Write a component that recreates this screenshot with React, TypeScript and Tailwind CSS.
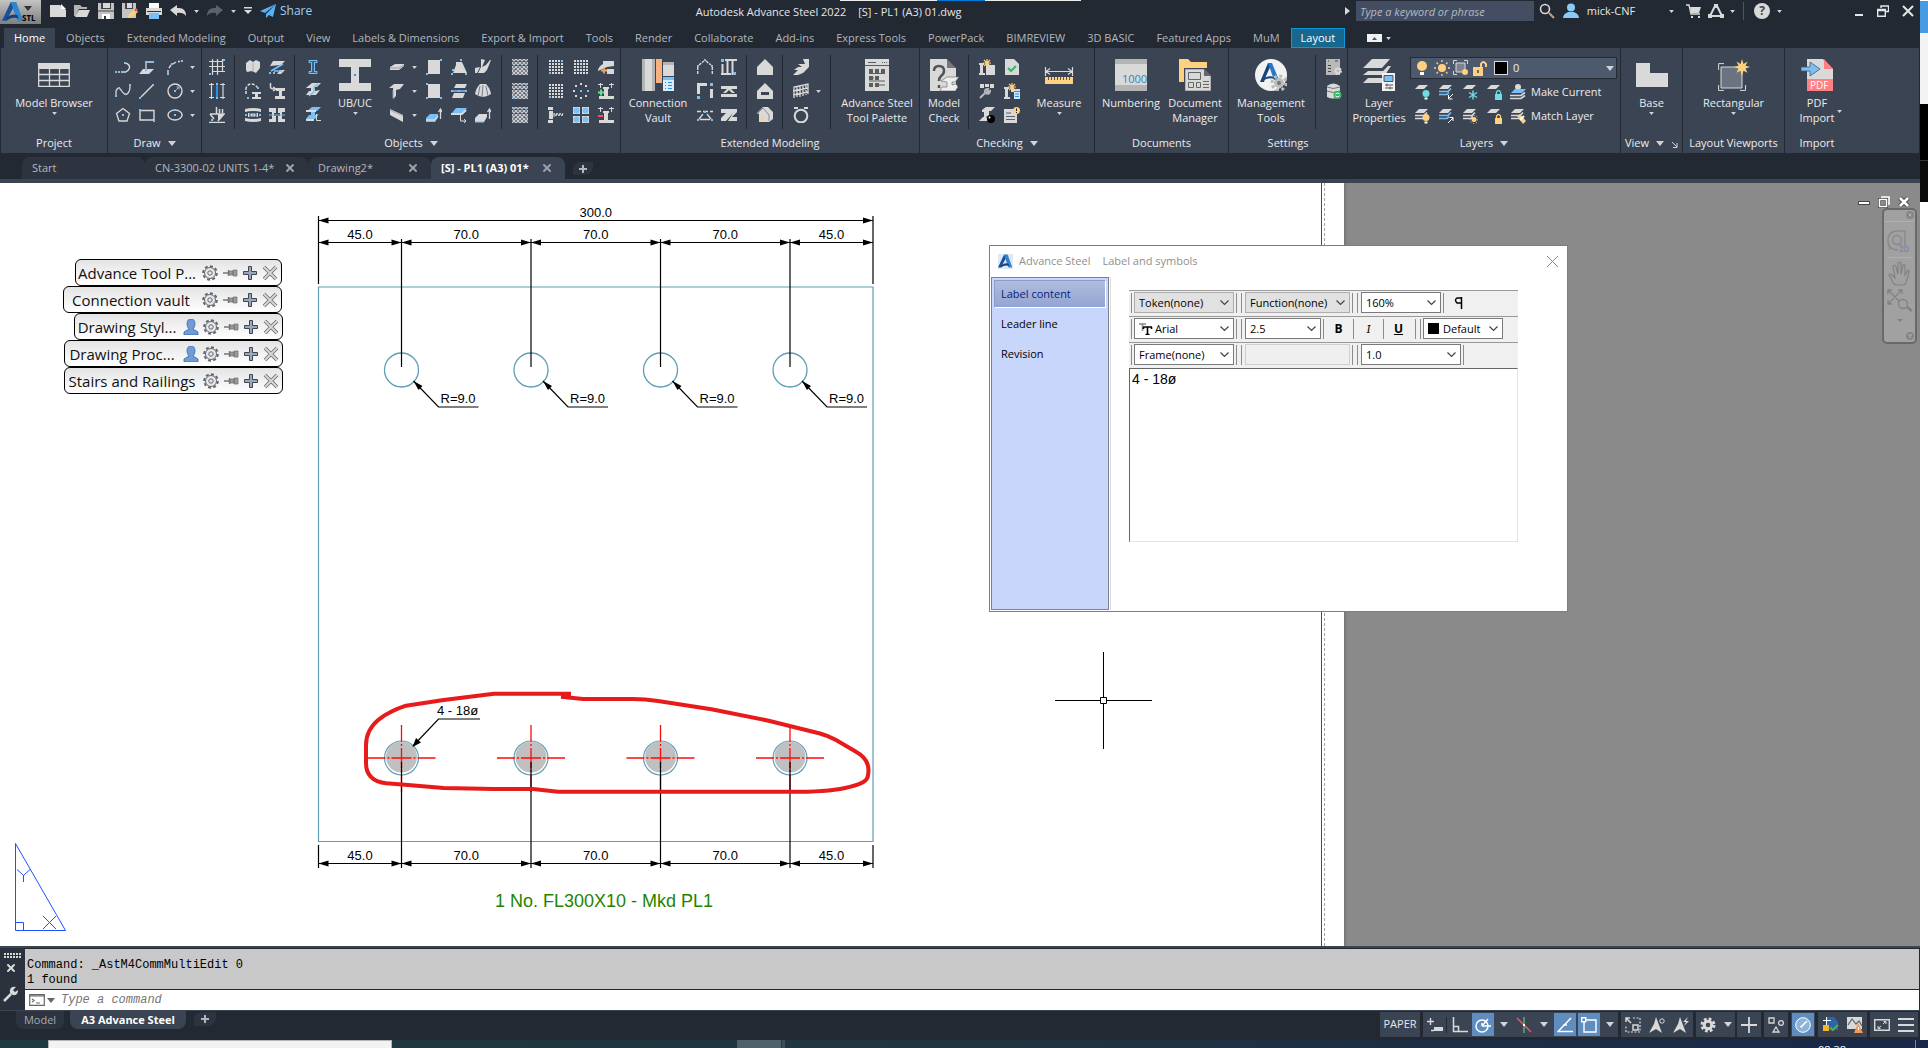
import React from 'react';
import { X, Check } from 'lucide-react';

const G = '#d9d9d9';
const B = '#78c0f5';
const Y = '#ffd080';

interface SvgProps {
  size?: number;
  children: React.ReactNode;
}

const Ico: React.FC<SvgProps> = ({ size = 16, children }) => (
  <svg width={size} height={size} viewBox={`0 0 ${size} ${size}`} fill="none" className="block shrink-0" aria-hidden="true">
    {children}
  </svg>
);

// small grip squares used on most drawing icons
const Dots: React.FC<{ at: number[][]; color?: string }> = ({ at, color = B }) => (
  <>
    {at.map(([x, y]) => (
      <rect key={`${x}-${y}`} x={x} y={y} width={2} height={2} fill={color} />
    ))}
  </>
);

const Caret: React.FC<{ big?: boolean; className?: string }> = ({ big = false, className = '' }) => (
  <svg width={big ? 8 : 5} height={big ? 5 : 3} viewBox="0 0 8 5" className={`block shrink-0 ${className}`} aria-hidden="true">
    <path d="M0 0h8L4 5z" fill="#d0d3d8" />
  </svg>
);

const cells = (cols: number, rows: number, step: number) =>
  Array.from({ length: cols * rows }, (_, i) => [(i % cols) * step, Math.floor(i / cols) * step]);

const DotGrid: React.FC<{ blue: number[] }> = ({ blue }) => (
  <Ico>
    {cells(5, 5, 3).map(([x, y], i) => (
      <rect key={i} x={x + 1} y={y + 1} width={2} height={2} fill={blue.includes(i) ? B : G} />
    ))}
  </Ico>
);

const Grating: React.FC<{ at: number[][] }> = ({ at }) => (
  <Ico>
    <path
      d="M0 4L4 0M0 8L8 0M0 12L12 0M0 16L16 0M4 16L16 4M8 16L16 8M12 16L16 12M12 0L16 4M8 0L16 8M4 0L16 12M0 0L16 16M0 4L12 16M0 8L8 16M0 12L4 16"
      stroke="#c9ccd0"
      strokeWidth="1.3"
    />
    <Dots at={at} />
  </Ico>
);

const Layers: React.FC<{ top?: string; mid?: string; single?: boolean; children?: React.ReactNode }> = ({ top = G, mid = G, single, children }) => (
  <Ico>
    <path d="M5 1h9l-4 4H1z" fill={top} />
    {!single && <path d="M1 7.500h9l3-3M1 10.500h8l2-2" stroke={mid} strokeWidth="1.600" />}
    {children}
  </Ico>
);

const draw = {
  polyline: (
    <Ico>
      <path d="M3 13h2M6 13h3M10 4q5 1 4.500 5q-1 3-4 4" stroke={G} strokeWidth="1.400" />
      <Dots at={[[0, 12], [9, 12], [9, 3]]} />
    </Ico>
  ),
  spline: (
    <Ico>
      <path d="M1 13V8q2-5 5-1q4 6 6 4q3-2 3-8" stroke={G} strokeWidth="1.300" />
      <Dots at={[[0, 12], [3, 4], [9, 10], [14, 1]]} />
    </Ico>
  ),
  polygon: (
    <Ico>
      <path d="M8 1.500l6.500 5-2.500 7.500H4L1.500 6.500z" stroke={G} strokeWidth="1.300" />
      <Dots at={[[7, 7]]} />
    </Ico>
  ),
  plane: (
    <Ico>
      <path d="M0 15l4-5h11l-5 5z" fill={G} />
      <path d="M7 12V3h6" stroke={G} strokeWidth="1.300" />
      <Dots at={[[6, 2], [13, 2], [6, 10]]} />
    </Ico>
  ),
  line: (
    <Ico>
      <path d="M2 14L14 2" stroke={G} strokeWidth="1.400" />
      <Dots at={[[0, 14], [13, 1]]} />
    </Ico>
  ),
  rect: (
    <Ico>
      <path d="M1 3.500h14v9.500H1z" stroke={G} strokeWidth="1.400" />
      <Dots at={[[0, 2], [14, 13]]} />
    </Ico>
  ),
  arc: (
    <Ico>
      <path d="M1 14V11M2 9l2-3M6 5l3-2M11 2.500h2" stroke={G} strokeWidth="1.400" />
      <Dots at={[[0, 14], [4, 4], [14, 1]]} />
    </Ico>
  ),
  circle: (
    <Ico>
      <circle cx="8" cy="8" r="7" stroke={G} strokeWidth="1.400" />
      <path d="M9 7l3-3M9.500 4H12v2.500" stroke={B} />
      <Dots at={[[7, 7]]} />
    </Ico>
  ),
  ellipse: (
    <Ico>
      <ellipse cx="8" cy="8" rx="7" ry="5" stroke={G} strokeWidth="1.400" />
      <Dots at={[[7, 7], [7, 2], [14, 7]]} />
    </Ico>
  ),
};

const obj = {
  grid: (
    <Ico>
      <path d="M3.500 0v16M8.500 0v16M13.500 0v13M0 2.500h13M0 7.500h16M3 12.500h13" stroke={G} strokeWidth="1.200" />
      <Dots at={[[14, 0], [0, 14]]} />
    </Ico>
  ),
  gridBlue: (
    <Ico>
      <path d="M2.500 0v16M14 0v16M0 1.500h5M11 1.500h5M0 14.500h5M11 14.500h5" stroke={G} strokeWidth="1.200" />
      <path d="M8 2v12" stroke="#2294ee" strokeWidth="2" />
      <Dots at={[[7, 0], [7, 14]]} />
    </Ico>
  ),
  level: (
    <Ico>
      <path d="M1 7h14l-6 7M1 7l4 5M0 15.500h16M7.500 0v7M10.500 2v4M13.500 2v4" stroke={G} strokeWidth="1.500" />
      <path d="M9 7h6l-6 7z" fill={G} />
      <Dots at={[[2, 12]]} />
    </Ico>
  ),
  extrude: (
    <Ico>
      <path d="M1 4l4-3 3 2 3-2 4 2v6l-4 5-4-2-5 1-1-2z" fill={G} />
      <path d="M8 4v9" stroke="#a8abb0" />
    </Ico>
  ),
  bend: (
    <Ico>
      <path d="M1 7l3-5h12l-4 4zM8 15l3-4h5l-4 4z" fill={G} />
      <path d="M2 12l12-7M5 12h8" stroke={B} strokeWidth="1.600" />
      <Dots at={[[0, 13], [4, 13]]} />
    </Ico>
  ),
  rotate: (
    <Ico>
      <path d="M1 11V5q3-6 9-3l3 3" stroke={G} strokeWidth="1.500" strokeDasharray="3 1.500" />
      <path d="M7 9h9v2h-3v3h3v2H7v-2h3v-3H7z" fill={G} />
      <Dots at={[[0, 5], [12, 4], [2, 14]]} />
    </Ico>
  ),
  move: (
    <Ico>
      <path d="M1.500 0v4q0 2 4 2M4 4l3 2-3 2" stroke={G} strokeWidth="1.500" />
      <path d="M7 5h9v3h-3v5h3v3H6v-3h4V8H7z" fill={G} />
    </Ico>
  ),
  curved: (
    <Ico>
      <path d="M0 2q8-2 16 0v3q-8-2-16 0zM0 11q8 2 16 0v3q-8 2-16 0zM3 6h10v4H3z" fill={G} />
      <Dots at={[[0, 7], [7, 7], [14, 7]]} />
      <path d="M5 6h6v4H5z" stroke="#3b4453" />
    </Ico>
  ),
  align: (
    <Ico>
      <path d="M0 1h7v5H5v3h2v6H0v-3h3V5H0zM9 1h7v4h-3v7h3v3H9V9h2V6H9z" fill={G} />
      <path d="M0 8h16" stroke={B} />
    </Ico>
  ),
  ibeam: (
    <Ico>
      <path d="M4 1.500h8v2H9.500v9H12v2H4v-2h2.500v-9H4z" stroke={B} fill="#35628a" />
    </Ico>
  ),
  beam3d: (
    <Ico>
      <path d="M2 4l5-4h9l-4 4h-2v4l5-1-4 5H1l3-4h2V5H1z" fill={G} />
      <path d="M4 13l5-4V4l4-3" stroke={B} strokeWidth="1.400" />
    </Ico>
  ),
  beamUcs: (
    <Ico>
      <path d="M2 4l5-4h9l-4 4h-2v4l4-1-4 5H1l3-4h2V5H1z" fill={B} />
      <path d="M1 4h10M1 13h8" stroke={G} strokeWidth="2" />
      <path d="M11.500 7v6.500H16" stroke={G} />
    </Ico>
  ),
  plate1: (
    <Ico>
      <path d="M1 8l5-3h9v2l-5 4H1z" fill={G} />
      <path d="M1 9h9l5-3" stroke="#999da5" />
    </Ico>
  ),
  plate2: (
    <Ico>
      <path d="M0 5l5-4h10l-4 5-4 1v6l-3 3V5z" fill={G} />
      <path d="M4 7v8" stroke="#999da5" />
    </Ico>
  ),
  plate3: (
    <Ico>
      <path d="M1 2l13 6v7L1 8z" fill={G} />
      <path d="M1 3l13 6" stroke="#aaadb3" />
    </Ico>
  ),
  sq1: (
    <Ico>
      <path d="M2 1h12v14H2z" fill={G} />
      <Dots at={[[14, 0], [0, 14]]} />
    </Ico>
  ),
  sq2: (
    <Ico>
      <path d="M2 1h12v14H2z" fill={G} />
      <Dots at={[[0, 0], [0, 14], [14, 14]]} />
    </Ico>
  ),
  up: (
    <Ico>
      <path d="M0 11l4-4h8v3l-3 5H0z" fill={B} />
      <path d="M0 13h9l3-4M14.500 12V3M12.500 5l2-3 1.500 3" stroke={G} strokeWidth="1.300" />
    </Ico>
  ),
  trap: (
    <Ico>
      <path d="M5 3h6l5 11H2l3-8z" fill={G} />
      <Dots at={[[9, 0], [1, 10], [0, 14], [14, 14]]} />
    </Ico>
  ),
  split: (
    <Ico>
      <path d="M5 1h11l-2 4H3zM3 10h11l-2 5H1z" fill={G} />
      <path d="M2 8h12" stroke={B} strokeWidth="1.500" />
      <Dots at={[[0, 7], [7, 7], [14, 7]]} />
    </Ico>
  ),
  slab: (
    <Ico>
      <path d="M5 1h11l-5 6H0z" fill={B} />
      <path d="M0 7h11l4-4" stroke={G} strokeWidth="2" />
      <path d="M9.500 8v6H15M13 12l2 2-2 2" stroke={G} />
    </Ico>
  ),
  fold: (
    <Ico>
      <path d="M0 9l5-1-3 6H0zM6 0l4 1-3 7 4-2 4-5h1l-4 10-3 3H3l3-6z" fill={G} />
    </Ico>
  ),
  cone: (
    <Ico>
      <path d="M5 1h6q4 4 5 10-8 6-16 0Q1 5 5 1z" fill={G} />
      <path d="M5 3L3 13M8 2L7 14M11 3l2 10" stroke="#777d88" />
    </Ico>
  ),
  up2: (
    <Ico>
      <path d="M0 11l4-4h8v3l-3 5H0z" fill={G} />
      <path d="M0 15h9" stroke={B} />
      <path d="M14.500 12V3M12.500 5l2-3 1.500 3" stroke={G} strokeWidth="1.300" />
    </Ico>
  ),
  bolt: (
    <Ico>
      <path d="M0 0h5v3H0zM1 4h4v8H1zM0 13h5v3H0z" fill={G} />
      <path d="M6 10V6l2 3 1-3 2 3 1-3 2 3 1-3" stroke={G} />
    </Ico>
  ),
  ring: (
    <Ico>
      <Dots at={[[2, 2], [7, 0], [12, 2], [0, 7], [2, 12], [7, 14], [12, 12]]} color={G} />
      <Dots at={[[7, 7], [14, 7]]} />
    </Ico>
  ),
  quad: (
    <Ico>
      <path d="M0 0h7v7H0zM9 0h7v7H9zM0 9h7v7H0zM9 9h7v7H9z" fill={G} />
      <circle cx="3.500" cy="3.500" r="3" fill={B} />
      <circle cx="12.500" cy="3.500" r="3" fill={B} />
      <circle cx="3.500" cy="12.500" r="3" fill={B} />
      <circle cx="12.500" cy="12.500" r="3" fill={B} />
    </Ico>
  ),
  weld: (
    <Ico>
      <path d="M0 12q0-4 5-7V2h11v5L9 8zM9 10h7v5H9z" fill={G} />
      <path d="M3 11.500h6M6 8.500v6" stroke="#f5a15f" strokeWidth="1.800" />
    </Ico>
  ),
  addPt: (
    <Ico>
      <path d="M0 1.500h5M2.500 0v5M11 1.500h5M13.500 0v5" stroke={G} />
      <path d="M5 4h6v2h-1v7h6v3H1v-3h5V6H5z" fill={G} />
      <path d="M0 9.500h6M3 6.500v6" stroke="#5ee084" strokeWidth="2" />
    </Ico>
  ),
  delPt: (
    <Ico>
      <path d="M0 1.500h5M2.500 0v5M11 1.500h5M13.500 0v5" stroke={G} />
      <path d="M5 4h6v2h-1v7h6v3H1v-3h5V6H5z" fill={G} />
      <path d="M0 9h5" stroke="#f05252" strokeWidth="2" />
    </Ico>
  ),
};

const ext = {
  portal: (
    <Ico>
      <path d="M.7 15V8M15.300 15V8M2 6l5-4M9 2l5 4" stroke={G} strokeWidth="1.400" strokeDasharray="3 1" />
      <Dots at={[[7, 0], [0, 6], [14, 6]]} />
    </Ico>
  ),
  frame: (
    <Ico>
      <path d="M1.500 11V1.500H10M14.500 6v9" stroke={G} strokeWidth="3" />
      <path d="M0 13h3v3H0zM13 0h3v3h-3z" fill={B} />
    </Ico>
  ),
  truss: (
    <Ico>
      <path d="M0 4.500h4M6 4.500h5M13 4.500h3M2 12l4-5M10 7l4 5M3 12.500h10" stroke={G} strokeWidth="1.300" />
      <Dots at={[[7, 4], [0, 12], [14, 12]]} />
    </Ico>
  ),
  bracing: (
    <Ico>
      <path d="M1.500 5v11M6.500 0v16M11.500 0v16M0 15h10M4 1h12" stroke={G} strokeWidth="2" />
      <path d="M0 0h3v3H0zM12 13h3v3h-3z" fill={B} />
    </Ico>
  ),
  panel: (
    <Ico>
      <path d="M0 3h16v3H0zM0 11h16v3H0zM2 10l4-4h4l4 4h-3L8 7l-3 3z" fill={G} />
    </Ico>
  ),
  zed: (
    <Ico>
      <path d="M0 2h16v3l-5 5h5v4H7l5-8-7 8H0v-3l5-5H0z" fill={G} />
    </Ico>
  ),
  roof: (
    <Ico>
      <path d="M0 8l8-8 8 8v8H0z" fill={G} />
    </Ico>
  ),
  roofSlot: (
    <Ico>
      <path d="M0 8l8-8 8 8v8H0z" fill={G} />
      <path d="M4 9h8v3H4z" fill="#3b4453" />
    </Ico>
  ),
  house: (
    <Ico>
      <path d="M0 6l6-6h5l5 5v7l-4 3H2V7z" fill={G} />
      <path d="M0 7l6-6 6 7v6" stroke="#888d96" />
      <path d="M4 9h3v5H4z" fill={Y} />
    </Ico>
  ),
  stair: (
    <Ico>
      <path d="M10 0h6v8l-6 6-5 2H0l5-5H1l4-3h4l-4-3h7z" fill={G} />
    </Ico>
  ),
  railing: (
    <Ico>
      <path d="M1 15V4l14-3v10M0 8l15-3M0 12l15-3M4 14V4M7 14V3M10 13V2M13 12V2" stroke={G} strokeWidth="1.300" />
    </Ico>
  ),
  cage: (
    <Ico>
      <path d="M1 1h4M11 1h4" stroke={G} strokeWidth="2" />
      <circle cx="8" cy="9" r="6.300" stroke={G} strokeWidth="2" />
    </Ico>
  ),
};

const Spark: React.FC<{ x?: number; y?: number }> = ({ x = 0, y = 0 }) => (
  <path
    d={`M${x + 4} ${y}v8M${x} ${y + 4}h8M${x + 1} ${y + 1}l6 6M${x + 7} ${y + 1}l-6 6`}
    stroke={Y}
    strokeWidth="1.200"
  />
);

const chk = {
  newBeam: (
    <Ico>
      <path d="M0 4h5v2H4v8h2v2H0v-2h1V6H0zM7 6h9v10H7z" fill={G} />
      <Spark x={4} />
    </Ico>
  ),
  tools: (
    <Ico>
      <path d="M1 1h4v4H1zM6 1h4v3H6zM11 1h4v4h-4z" fill={G} />
      <path d="M1 15l5-5M6 10q-1-4 3-4l-1 3 3-1q0 4-5 2" stroke="#b3b6bb" strokeWidth="2" />
    </Ico>
  ),
  clash: (
    <Ico>
      <path d="M3 3l4-3h9l-4 4h-2v4l-3 2 3 4H0l4-4h1V5H3z" fill={G} />
      <circle cx="12" cy="12" r="4" fill="#000" />
      <circle cx="10.500" cy="10.500" r="1" fill="#fff" />
    </Ico>
  ),
  page: (
    <Ico>
      <path d="M1 0h9l5 5v11H1z" fill={G} />
      <path d="M4 9l3 3 5-5" stroke="#35b765" strokeWidth="2" />
    </Ico>
  ),
  beamList: (
    <Ico>
      <path d="M0 4h5v2H4v8h2v2H0v-2h1V6H0zM7 6h9v3H7z" fill={G} />
      <path d="M10 8h6v8h-6z" fill="#cfe8ff" />
      <path d="M10 8.500h6M11 11h4M11 13.500h4" stroke="#2294ee" />
      <Spark x={4} />
    </Ico>
  ),
  warn: (
    <Ico>
      <path d="M0 2h13v14H0z" fill={G} />
      <path d="M2 6h5M2 9.500h9M2 12.500h9" stroke="#5a616c" />
      <circle cx="12.500" cy="3.500" r="3.500" fill={Y} />
      <path d="M12.500 1.500v2.500M12.500 5v1" stroke="#222" />
    </Ico>
  ),
  settings: (
    <Ico>
      <path d="M0 0h14v16H0z" fill="#b9b9b9" />
      <path d="M2 2h1M9 2h3M2 6.500h3M2 9.500h3M2 12.500h3" stroke="#444" />
      <circle cx="12" cy="12" r="3" stroke={G} strokeWidth="2" strokeDasharray="1.600 1" />
      <circle cx="12" cy="12" r="2.200" stroke={G} strokeWidth="1.600" />
    </Ico>
  ),
  db: (
    <Ico>
      <path d="M1 3q6-5 13 0v11q-7 3-13 0z" fill={G} />
      <path d="M1 4q6 3 13 0M1 8q6 3 13 0" stroke="#777" />
      <circle cx="11.500" cy="12" r="4" fill="#35b765" />
      <path d="M9.500 11q2-2 4 0M9.500 13q2 2 4 0" stroke="#fff" />
    </Ico>
  ),
};

const bulb = (color: string) => (
  <>
    <circle cx="12" cy="9.500" r="3.500" fill={color} />
    <path d="M10.500 14.500h3" stroke="#fff" strokeWidth="2" />
  </>
);
const lockShape = (color: string) => (
  <>
    <path d="M9 10h7v6H9z" fill={color} />
    <path d="M10.500 10V8q2-3 4 0v2" stroke={color} strokeWidth="1.300" />
  </>
);

const layerRows = [
  {
    label: 'Make Current',
    icons: [
      <Layers key="a" single>{bulb('#6fdde6')}</Layers>,
      <Layers key="b" mid={B}><path d="M15 10l-4 4M10.500 11v4h4" stroke="#fff" /></Layers>,
      <Layers key="c" single><path d="M11 6.500v9M7 8.500l8 5M15 8.500l-8 5" stroke="#6fdde6" strokeWidth="1.400" /></Layers>,
      <Layers key="d" single>{lockShape('#6fdde6')}</Layers>,
    ],
    last: (
      <Ico>
        <circle cx="8" cy="3" r="3" fill={G} />
        <path d="M5 5h11l-4 4H1z" fill={B} />
        <path d="M0 11.500h11l4-3M0 14.500h11l4-3" stroke={G} strokeWidth="1.600" />
      </Ico>
    ),
  },
  {
    label: 'Match Layer',
    icons: [
      <Layers key="a">{bulb(Y)}</Layers>,
      <Layers key="b" mid={B}><path d="M10 15l5-5M11.500 9.500H15V13" stroke="#fff" /></Layers>,
      <Layers key="c"><circle cx="12" cy="11.500" r="2.500" fill={Y} /><circle cx="12" cy="11.500" r="4" stroke={Y} strokeDasharray="1 2" /></Layers>,
      <Layers key="d" single>{lockShape(Y)}</Layers>,
    ],
    last: (
      <Layers>
        <path d="M7 8l3-2 6 7-3 3z" fill={Y} />
        <path d="M10 12l4-4" stroke="#fff" strokeWidth="2" />
      </Layers>
    ),
  },
];

const LogoA: React.FC<{ size: number }> = ({ size }) => (
  <svg width={size} height={size} viewBox="0 0 20 20" className="block shrink-0" aria-hidden="true">
    <path d="M0 18L8 1h5L6 14l-2 4z" fill="#1b4f9c" />
    <path d="M8 1h5l6 17h-5L10 7z" fill="#2f86cf" />
    <path d="M4 15q6-4 10-2l1 3q-6-2-11 2z" fill="#17407f" />
  </svg>
);

const big = {
  browser: (
    <Ico size={32}>
      <path d="M0 4h32v6H0z" fill={G} />
      <path d="M.7 4.700h30.600v22.600H.7zM0 15.500h32M0 21.500h32M11.500 10v17M21.500 10v17" stroke={G} strokeWidth="1.300" />
    </Ico>
  ),
  ubuc: (
    <Ico size={32}>
      <path d="M0 0h32v8H20v16h12v8H0v-8h12V8H0z" fill={G} />
      <path d="M15 15h2v2h-2z" fill="#2294ee" />
    </Ico>
  ),
  vault: (
    <Ico size={32}>
      <path d="M0 0h13v32H0z" fill={G} />
      <path d="M0 0h3v32H0zM10 0h3v32h-3zM21 3h11v3H21z" fill="#b4b4b4" />
      <path d="M14 0h6v24h-6z" fill="#f8b282" />
      <path d="M21 6h11v11H21z" fill={G} />
      <path d="M21 18h11v14H21z" fill="#d8edff" />
      <path d="M21 18h11v3H21z" fill={B} />
      <path d="M23 23.500h1M26 23.500h4M23 26.500h1M26 26.500h4M23 29.500h1M26 29.500h4" stroke="#2294ee" />
    </Ico>
  ),
  palette: (
    <Ico size={32}>
      <path d="M4 0h24v32H4z" fill={G} />
      <path d="M7 3.500h8M21 3.500h1M23 3.500h1M25 3.500h1M4 6.500h24M8 14.500h16M8 22h16M16 26h8M8 19h5" stroke="#5c5c5c" />
      <path d="M8 10h4v4H8zM14 10h4v4h-4zM20 10h4v4h-4zM8 17h4v4H8zM14 17h4v4h-4zM8 24h4v4H8zM14 24h4v4h-4z" fill="#5c5c5c" />
    </Ico>
  ),
  check: (
    <Ico size={32}>
      <path d="M2 0h17v9h9v23H2z" fill={G} />
      <path d="M19 0l9 9h-9z" fill="#777" />
      <path d="M6 12q0-5 5-5t5 5q0 3-3 5-2 2-2 5M11 26v3" stroke="#555" strokeWidth="2.500" />
      <path d="M13 22l6-4h12l-4 5h-3v3l4-1 2 3-3 4H12l2-4h5v-5z" fill="#eee" stroke="#777" strokeWidth=".7" />
    </Ico>
  ),
  measure: (
    <Ico size={32}>
      <path d="M2.500 8v9M29.500 8v9M4 12.500h24M7 9.500l-4 3 4 3M25 9.500l4 3-4 3" stroke={G} strokeWidth="1.200" />
      <path d="M2 18h28v7H2z" fill={Y} />
      <path d="M5.500 18v3M8.500 18v3M11.500 18v3M14.500 18v3M17.500 18v3M20.500 18v3M23.500 18v3M26.500 18v3" stroke="#555" />
    </Ico>
  ),
  numbering: (
    <Ico size={32}>
      <path d="M0 0h32v32H0z" fill={G} />
      <path d="M0 0h32v5H0zM0 26h32v6H0z" fill="#b4b4b4" />
      <text x="7" y="24" fontSize="11" fontFamily="Open Sans" fill="#2a86c8">1000</text>
    </Ico>
  ),
  docs: (
    <Ico size={32}>
      <path d="M0 0h9l3 3h16v6H5v14H0z" fill={Y} />
      <path d="M6 10h19l7 7v15H6z" fill={G} stroke="#555" strokeWidth=".6" />
      <path d="M25 10l7 7h-7z" fill="#666" />
      <path d="M9.500 13.500h12v7h-12zM9.500 23.500h5v5h-5zM17.500 23.500h4v5h-4zM24 22.500h6M24 25.500h6M24 28.500h6" stroke="#666" />
    </Ico>
  ),
  mgmt: (
    <Ico size={32}>
      <circle cx="16" cy="16" r="16" fill="#f2f2f2" />
      <path d="M5 23L13 4h4l-6 13-2 6z" fill="#16447f" />
      <path d="M13 4h4l7 17h-5z" fill="#2c78c4" />
      <path d="M9 19q5-3 10-1l1 2q-6-2-11 1z" fill="#16447f" />
      <circle cx="24" cy="24" r="7" stroke="#bcbcbc" strokeWidth="3" strokeDasharray="3 2.500" />
      <circle cx="24" cy="24" r="5" fill="#bcbcbc" />
      <circle cx="24" cy="24" r="2" fill="#777" />
    </Ico>
  ),
  layers: (
    <Ico size={32}>
      <path d="M9 0h18l-8 9H0zM0 16l5-4h15l5-5h3l-6 9zM0 24l5-5h14v5z" fill={G} />
      <path d="M19 14h13v18H19z" fill="#f4f4f4" />
      <path d="M21 16.500h9v6h-9z" fill={B} stroke="#555" />
      <path d="M22 26h8M22 29h8M24 24.500v3M27 27.500v3" stroke="#555" />
    </Ico>
  ),
  base: (
    <Ico size={32}>
      <path d="M0 4h14v10h18v14H0z" fill={G} />
    </Ico>
  ),
  viewport: (
    <Ico size={32}>
      <path d="M3 8h21v21H3z" fill="#6b7280" stroke={G} />
      <path d="M.6 11V4.600H6M.6 26v5.400H6M22 31.400h5.500V26" stroke={G} />
      <path d="M24 0l1.500 5 4-2.500-2 4.200L32 8l-4.500 1.500 2 4.200-4-2L24 17l-1.500-5.300-4 2 2-4.200L16 8l4.500-1.300-2-4.200 4 2.500z" fill={Y} />
    </Ico>
  ),
  pdf: (
    <Ico size={32}>
      <path d="M6 0h16l10 10v12H6z" fill={G} />
      <path d="M23 0l9 10h-9z" fill="#ff8080" />
      <path d="M6 20h26v12H6z" fill="#ff8080" />
      <path d="M0 8h9V3l10 7-10 7v-5H0z" fill={B} stroke="#4d5866" strokeWidth=".8" />
      <text x="9" y="30" fontSize="10" fontFamily="Open Sans" fill="#fff">PDF</text>
    </Ico>
  ),
};

const Stack: React.FC<{ icons: React.ReactNode[]; name: string; className?: string }> = ({ icons, name, className = '' }) => (
  <div className={`flex w-4 shrink-0 flex-col gap-2 ${className}`}>
    {icons.map((icon, i) => (
      <button key={i} type="button" aria-label={`${name} ${i + 1}`} className="h-4 w-4">
        {icon}
      </button>
    ))}
  </div>
);

const Carets: React.FC<{ className?: string }> = ({ className = '' }) => (
  <div className={`flex flex-col gap-2 ${className}`}>
    {[0, 1, 2].map((i) => (
      <span key={i} className="flex h-4 items-center">
        <Caret />
      </span>
    ))}
  </div>
);

const Sep: React.FC<{ className?: string }> = ({ className = '' }) => <div className={`-mt-1 h-[74px] w-px shrink-0 bg-[#222933] ${className}`} />;

const BigButton: React.FC<{ icon: React.ReactNode; lines: string[]; caret?: boolean; className?: string }> = ({ icon, lines, caret, className = '' }) => (
  <button type="button" className={`flex shrink-0 flex-col items-center whitespace-nowrap leading-[15px] ${className}`}>
    {icon}
    <span className="mt-1">{lines[0]}</span>
    {lines[1] && <span>{lines[1]}</span>}
    {caret && <Caret className="mt-[2px]" />}
  </button>
);

const Panel: React.FC<{ title: string; className?: string; caret?: boolean; last?: boolean; launcher?: boolean; children: React.ReactNode }> = ({
  title,
  className = '',
  caret,
  last,
  launcher,
  children,
}) => (
  <section className={`flex shrink-0 flex-col pt-[11px] ${last ? '' : 'border-r border-[#222933]'} ${className}`}>
    <div className="flex flex-1">{children}</div>
    <div className="flex h-5 items-center justify-center gap-[7px] whitespace-nowrap">
      <span>{title}</span>
      {caret && <Caret big />}
      {launcher && (
        <svg width="6" height="6" viewBox="0 0 6 6" fill="none" className="ml-px mt-1" aria-hidden="true">
          <path d="M0 0l5 5M5 1v4.500H1" stroke="#d0d3d8" />
        </svg>
      )}
    </div>
  </section>
);

const ribbonTabs = [
  'Home', 'Objects', 'Extended Modeling', 'Output', 'View', 'Labels & Dimensions', 'Export & Import', 'Tools', 'Render',
  'Collaborate', 'Add-ins', 'Express Tools', 'PowerPack', 'BIMREVIEW', '3D BASIC', 'Featured Apps', 'MuM', 'Layout',
];

const TitleBar = () => (
  <header className="flex h-7 shrink-0 items-start bg-[#222933] text-[11px]">
    <button type="button" className="flex h-6 w-[41px] items-center bg-gradient-to-b from-[#c4c4c4] to-[#7f7f7f] pl-[2px] text-black">
      <LogoA size={22} />
      <span className="-ml-[2px] mt-3 text-[8px] leading-3 font-bold">STL</span>
      <svg width="8" height="5" viewBox="0 0 8 5" className="-ml-3 -mt-2" aria-hidden="true"><path d="M0 0h8L4 5z" fill="#333" /></svg>
    </button>
    <div className="ml-[9px] flex h-[22px] items-center gap-2">
      <Ico><path d="M0 2h10l6 5v7H0z" fill={G} /><path d="M11 1l5 5h-5z" fill="#fff" /></Ico>
      <Ico><path d="M0 2h6l2 2h5v2H5L2 13H0z" fill="#b4b4b4" /><path d="M5 7h11l-3 7H1z" fill={G} /></Ico>
      <Ico><path d="M0 0h16v16H0z" fill="#c4c4c4" /><path d="M3 0h10v6H3z" fill="#444" /><path d="M5 0h7v5H5z" fill={G} /><path d="M0 8h16" stroke="#444" /><path d="M4 11h8v5H4z" fill="#fff" /><path d="M6 13h2v3H6z" fill="#333" /></Ico>
      <Ico><path d="M0 0h14v15H0z" fill="#c4c4c4" /><path d="M3 0h8v6H3z" fill="#444" /><path d="M5 0h5v5H5z" fill={G} /><path d="M6 15l1-4 6-5 3 3-6 5z" fill={Y} /><path d="M12 7l2-2 2 2-2 2z" fill="#e86060" /></Ico>
      <Ico><path d="M3 0h10v5H3z" fill="#fff" /><path d="M0 5h16v7H0z" fill={G} /><path d="M3 10h10v6H3z" fill={B} /><path d="M1 8.500h14" stroke="#333" /></Ico>
      <Ico><path d="M0 7l7-5v3q9-1 9 8-3-4-9-3v3z" fill={G} /></Ico>
      <Caret />
      <Ico><path d="M16 7L9 2v3q-9-1-9 8 3-4 9-3v3z" fill="#5c626b" /></Ico>
      <Caret />
      <svg width="8" height="8" viewBox="0 0 8 8" aria-hidden="true"><path d="M0 0h8v1.500H0zM0 3h8L4 7z" fill={G} /></svg>
      <button type="button" className="flex items-center gap-1 text-[12px] text-[#9fcff5]">
        <Ico><path d="M16 1L0 8l5 2zM16 1L6 11v4l3-3 4 2z" fill="#57b1f5" /></Ico>
        Share
      </button>
    </div>
    <h1 className="flex h-6 flex-1 items-center justify-center gap-3 whitespace-nowrap text-[#e6e6e6]">
      <span>Autodesk Advance Steel 2022</span>
      <span>[S] - PL1 (A3) 01.dwg</span>
    </h1>
    <div className="flex h-[22px] shrink-0 items-center text-[#e6e6e6]">
      <svg width="5" height="8" viewBox="0 0 5 8" aria-hidden="true"><path d="M0 0l5 4-5 4z" fill={G} /></svg>
      <input
        aria-label="Search"
        placeholder="Type a keyword or phrase"
        className="ml-[6px] h-5 w-[178px] bg-[#434e62] px-1 italic outline-none placeholder:text-[#b4b9c2]"
      />
      <span className="ml-[5px]"><Ico><circle cx="6" cy="6" r="4.500" stroke={G} strokeWidth="1.600" /><path d="M10 10l5 5" stroke="#c9a27a" strokeWidth="2" /></Ico></span>
      <button type="button" className="ml-2 flex items-center gap-[5px]">
        <Ico><circle cx="8" cy="4.500" r="4" fill="#8ccaf8" /><path d="M0 15q0-4 5-6h6q5 2 5 6z" fill="#8ccaf8" /></Ico>
        <span className="w-[54px]">mick-CNF</span>
      </button>
      <Caret className="ml-[31px]" />
      <span className="ml-3"><Ico><path d="M0 2h3l2 9h9" stroke={G} strokeWidth="1.400" /><path d="M4 4h11l-2 6H5z" fill={G} /><path d="M5 13h2v2H5zM12 13h2v2h-2z" fill={G} /></Ico></span>
      <span className="ml-[6px]"><Ico><path d="M2 13L7 3h2l5 10M2 13h12" stroke={G} strokeWidth="2" /><path d="M0 11h4v4H0zM12 11h4v4h-4zM6 1h4v4H6z" fill={G} /></Ico></span>
      <Caret className="ml-[6px]" />
      <span className="ml-2 h-[18px] w-px bg-[#4d5563]" />
      <span className="ml-[10px] flex h-4 w-4 items-center justify-center rounded-full bg-[#d9d9d9] text-[12px] font-bold text-[#444]">?</span>
      <Caret className="ml-[7px]" />
      <div className="ml-[72px] mr-[6px] flex items-center gap-[13px]">
        <button type="button" aria-label="Minimize"><svg width="10" height="12" viewBox="0 0 10 12" aria-hidden="true"><path d="M1 9h8v2H1z" fill="#e6e6e6" /></svg></button>
        <button type="button" aria-label="Restore"><svg width="12" height="12" viewBox="0 0 12 12" fill="none" aria-hidden="true"><path d="M4 3V1h7.500v5.500H9M.7 4.500h7.600v6.800H.7zM.7 5.500h7.600" stroke="#e6e6e6" strokeWidth="1.400" /></svg></button>
        <button type="button" aria-label="Close"><svg width="12" height="12" viewBox="0 0 12 12" fill="none" aria-hidden="true"><path d="M1 1l10 10M11 1L1 11" stroke="#e6e6e6" strokeWidth="2" /></svg></button>
      </div>
    </div>
  </header>
);

const RibbonTabs = () => (
  <nav className="flex h-5 shrink-0 items-stretch bg-[#222933] pl-1 text-[11px] whitespace-nowrap text-[#b3b7bd]">
    {ribbonTabs.map((tab) => (
      <button
        key={tab}
        type="button"
        className={`${
          tab === 'Home'
            ? 'bg-[#3b4453] px-[10px] text-white'
            : tab === 'Layout'
              ? 'border border-[#0d96e0] bg-[#17678f] px-[9px] text-white'
              : 'px-[11px]'
        }`}
      >
        {tab}
      </button>
    ))}
    <button type="button" aria-label="Minimize ribbon" className="ml-[22px] flex items-center gap-1">
      <span className="flex h-2 w-[15px] items-center justify-center bg-[#eef0f2]">
        <svg width="5" height="3" viewBox="0 0 5 3" aria-hidden="true"><path d="M0 3h5L2.500 0z" fill="#555" /></svg>
      </span>
      <Caret />
    </button>
  </nav>
);

const Ribbon = () => (
  <div className="flex h-[105px] shrink-0 overflow-hidden border-x border-[#222933] bg-[#3b4453] text-[11px] text-[#ececec]">
    <Panel title="Project" className="w-[107px]">
      <BigButton icon={big.browser} lines={['Model Browser']} caret className="w-full" />
    </Panel>
    <Panel title="Draw" caret className="w-[94px]">
      <Stack name="Draw line" className="ml-[7px]" icons={[draw.polyline, draw.spline, draw.polygon]} />
      <Stack name="Draw shape" className="ml-2" icons={[draw.plane, draw.line, draw.rect]} />
      <Stack name="Draw curve" className="ml-3" icons={[draw.arc, draw.circle, draw.ellipse]} />
      <Carets className="ml-[7px]" />
    </Panel>
    <Panel title="Objects" caret className="w-[419px]">
      <Stack name="Grid" className="ml-[7px]" icons={[obj.grid, obj.gridBlue, obj.level]} />
      <Sep className="ml-[9px]" />
      <Stack name="Modify" className="ml-[10px]" icons={[obj.extrude, obj.rotate, obj.curved]} />
      <Stack name="Transform" className="ml-2" icons={[obj.bend, obj.move, obj.align]} />
      <Sep className="ml-[9px]" />
      <Stack name="Beam" className="ml-[10px]" icons={[obj.ibeam, obj.beam3d, obj.beamUcs]} />
      <BigButton icon={big.ubuc} lines={['UB/UC']} caret className="ml-4 w-9" />
      <Stack name="Plate" className="ml-4" icons={[obj.plate1, obj.plate2, obj.plate3]} />
      <Carets className="ml-[7px]" />
      <Stack name="Plate shape" className="ml-[9px]" icons={[obj.sq1, obj.sq2, obj.up]} />
      <Stack name="Plate edit" className="ml-[9px]" icons={[obj.trap, obj.split, obj.slab]} />
      <Stack name="Folded plate" className="ml-2" icons={[obj.fold, obj.cone, obj.up2]} />
      <Sep className="ml-[10px]" />
      <Stack
        name="Grating"
        className="ml-[10px]"
        icons={[<Grating key="a" at={[[7, 7]]} />, <Grating key="b" at={[[14, 0], [0, 14]]} />, <Grating key="c" at={[[0, 0], [14, 0]]} />]}
      />
      <Sep className="ml-[9px]" />
      <Stack name="Bolts" className="ml-[10px]" icons={[<DotGrid key="a" blue={[4, 20]} />, <DotGrid key="b" blue={[20]} />, obj.bolt]} />
      <Stack name="Anchors" className="ml-[9px]" icons={[<DotGrid key="a" blue={[12]} />, obj.ring, obj.quad]} />
      <Stack name="Welds" className="ml-[9px]" icons={[obj.weld, obj.addPt, obj.delPt]} />
    </Panel>
    <Panel title="Extended Modeling" className="w-[299px]">
      <BigButton icon={big.vault} lines={['Connection', 'Vault']} className="ml-[5px] w-16" />
      <Stack name="Frame" className="ml-[7px]" icons={[ext.portal, ext.frame, ext.truss]} />
      <Stack name="Bracing" className="ml-2" icons={[ext.bracing, ext.panel, ext.zed]} />
      <Sep className="ml-[9px]" />
      <Stack name="Roof" className="ml-[10px]" icons={[ext.roof, ext.roofSlot, ext.house]} />
      <Sep className="ml-[9px]" />
      <Stack name="Stairs" className="ml-[10px]" icons={[ext.stair, ext.railing, ext.cage]} />
      <Caret className="ml-[7px] mt-[31px]" />
      <Sep className="ml-[9px]" />
      <BigButton icon={big.palette} lines={['Advance Steel', 'Tool Palette']} className="ml-[6px] w-20" />
    </Panel>
    <Panel title="Checking" caret className="w-[175px]">
      <BigButton icon={big.check} lines={['Model', 'Check']} className="ml-[6px] w-9" />
      <Sep className="ml-[6px]" />
      <Stack name="Check" className="ml-[10px]" icons={[chk.newBeam, chk.tools, chk.clash]} />
      <Stack name="Report" className="ml-[9px]" icons={[chk.page, chk.beamList, chk.warn]} />
      <BigButton icon={big.measure} lines={['Measure']} caret className="ml-[14px] w-[50px]" />
    </Panel>
    <Panel title="Documents" className="w-[134px]">
      <BigButton icon={big.numbering} lines={['Numbering']} className="ml-1 w-16" />
      <BigButton icon={big.docs} lines={['Document', 'Manager']} className="w-16" />
    </Panel>
    <Panel title="Settings" className="w-[119px]">
      <BigButton icon={big.mgmt} lines={['Management', 'Tools']} className="ml-[2px] w-20" />
      <Sep className="ml-1" />
      <Stack name="Settings" className="ml-[10px]" icons={[chk.settings, chk.db]} />
    </Panel>
    <Panel title="Layers" caret className="w-[273px]">
      <BigButton icon={big.layers} lines={['Layer', 'Properties']} className="w-[62px]" />
      <div className="-mt-[2px] w-[207px]">
        <div className="relative flex h-[22px] items-center gap-[3px] border border-[#252b35] bg-[#4d5a6e] pl-1">
          <Ico><circle cx="7" cy="6" r="5" fill={Y} /><path d="M7 12v3" stroke="#fff" strokeWidth="4" /></Ico>
          <Ico><circle cx="8" cy="8" r="4" fill={Y} /><path d="M8 0v2M8 14v2M0 8h2M14 8h2M2.500 2.500l1.500 1.500M12 12l1.500 1.500M13.500 2.500L12 4M4 12l-1.500 1.500" stroke={Y} strokeWidth="1.300" /></Ico>
          <Ico><path d="M3 3h9v9H3z" fill="#7d8490" stroke={G} /><path d="M.5 4V.5H4M11 .5h3.500V4M.5 11v3.500H4" stroke={G} /><circle cx="12" cy="12" r="3" fill={Y} /></Ico>
          <Ico><path d="M1 7h10v9H1z" fill={Y} /><path d="M9 7V4q2-4 5 0v3" stroke={Y} strokeWidth="2" /><path d="M6 10v3" stroke="#444" strokeWidth="1.500" /></Ico>
          <span className="ml-[3px] h-[14px] w-[14px] border border-[#d9d9d9] bg-black" />
          <select aria-label="Layer" className="h-full flex-1 appearance-none bg-transparent pl-[2px] text-[11px] leading-4 outline-none">
            <option>0</option>
          </select>
          <Caret big className="absolute right-[2px] top-2" />
        </div>
        {layerRows.map((row, i) => (
          <div key={row.label} className={`flex h-4 items-center gap-2 pl-1 ${i ? 'mt-2' : 'mt-[5px]'}`}>
            {row.icons}
            <button type="button" className="flex items-center gap-[5px] leading-4 whitespace-nowrap">
              {row.last}
              <span>{row.label}</span>
            </button>
          </div>
        ))}
      </div>
    </Panel>
    <Panel title="View" caret launcher className="w-[62px]">
      <BigButton icon={big.base} lines={['Base']} caret className="w-full" />
    </Panel>
    <Panel title="Layout Viewports" className="w-[102px]">
      <BigButton icon={big.viewport} lines={['Rectangular']} caret className="w-full" />
    </Panel>
    <Panel title="Import" last className="w-[64px]">
      <BigButton icon={big.pdf} lines={['PDF', 'Import']} className="w-full" />
      <Caret className="-ml-3 mt-[51px]" />
    </Panel>
  </div>
);

const docTabs = [
  { name: 'Start', width: 'w-[123px]', closable: false },
  { name: 'CN-3300-02 UNITS 1-4*', width: 'w-[163px]', closable: true },
  { name: 'Drawing2*', width: 'w-[123px]', closable: true },
  { name: '[S] - PL1 (A3) 01*', width: 'w-[134px]', closable: true, active: true },
];

const DocTabs = () => (
  <div className="flex h-[30px] shrink-0 items-start border-b-4 border-[#3b4453] bg-[#222933] pl-[22px] pt-1 text-[11px]">
    {docTabs.map((tab) => (
      <div
        key={tab.name}
        className={`flex h-[22px] shrink-0 items-center justify-between rounded-t-lg pl-[10px] pr-3 whitespace-nowrap ${tab.width} ${
          tab.active ? 'bg-[#3b4453] font-bold text-white' : 'bg-[#2d3440] text-[#b3b7bd]'
        }`}
      >
        <button type="button">{tab.name}</button>
        {tab.closable && (
          <button type="button" aria-label={`Close ${tab.name}`}>
            <X size={12} strokeWidth={4} color="#9da1a8" />
          </button>
        )}
      </div>
    ))}
    <button type="button" aria-label="New tab" className="ml-2 mt-[5px] flex h-[13px] w-5 items-center justify-center rounded-tl-lg rounded-br-lg bg-[#2d3440]">
      <svg width="8" height="8" viewBox="0 0 8 8" aria-hidden="true"><path d="M4 0v8M0 4h8" stroke="#b3b7bd" strokeWidth="2" /></svg>
    </button>
  </div>
);

const xs = [318.5, 401.5, 531, 660.5, 790, 873];
const holes = xs.slice(1, 5);

const Dimension: React.FC<{ x1: number; x2: number; y: number; label: string }> = ({ x1, x2, y, label }) => (
  <g>
    <path d={`M${x1} ${y}H${x2}`} stroke="#000" strokeWidth="1.200" />
    <path d={`M${x1} ${y}l10-3v6zM${x2} ${y}l-10-3v6z`} fill="#000" />
    <text x={(x1 + x2) / 2} y={y - 4} textAnchor="middle" fontSize="13" fill="#000">{label}</text>
  </g>
);

const dimLabels = ['45.0', '70.0', '70.0', '70.0', '45.0'];

const PlateDrawing = () => (
  <svg width="1344" height="763" viewBox="0 183 1344 763" fill="none" fontFamily="Liberation Sans, Arial, sans-serif" className="absolute left-0 top-0">
    <path d="M318.500 287H873v554.500H318.500z" stroke="#5f9fb5" strokeWidth="1.200" />
    <path d="M318.500 216v68M873 216v68M318.500 845v23M873 845v23" stroke="#000" strokeWidth="1.200" />
    <Dimension x1={318.5} x2={873} y={220.5} label="300.0" />
    {dimLabels.map((label, i) => (
      <g key={i}>
        <Dimension x1={xs[i]} x2={xs[i + 1]} y={242.5} label={label} />
        <Dimension x1={xs[i]} x2={xs[i + 1]} y={863.5} label={label} />
      </g>
    ))}
    {holes.map((x) => (
      <g key={x}>
        <circle cx={x} cy={370} r={17} stroke="#5f9fb5" strokeWidth="1.300" />
        <path d={`M${x} 239V367`} stroke="#000" strokeWidth="1.200" />
        <path d={`M${x + 12} 381l25 26h40`} stroke="#000" strokeWidth="1.200" />
        <path d={`M${x + 12} 381l9 5-4 4z`} fill="#000" />
        <text x={x + 39} y={403} fontSize="13" fill="#000">R=9.0</text>
        <circle cx={x} cy={758} r={17} stroke="#5f9fb5" strokeWidth="1.200" />
        <circle cx={x} cy={757} r={15.5} fill="#c0c0c0" />
        <path d={`M${x} 725v17M${x} 744v2M${x} 748v20M${x} 770v2M${x} 774v18`} stroke="#ff0a0a" strokeWidth="1.300" />
        <path d={`M${x - 34} 758h18M${x - 14} 758h2M${x - 10} 758h20M${x + 12} 758h2M${x + 16} 758h18`} stroke="#ff0a0a" strokeWidth="1.300" />
        <path d={`M${x} 762V868`} stroke="#000" strokeWidth="1.200" />
      </g>
    ))}
    <path d="M480 719h-41.500L413 746" stroke="#000" strokeWidth="1.200" />
    <path d="M412.500 747l3.500-9 5 4.500z" fill="#000" />
    <text x="437" y="715" fontSize="13" fill="#000">4 - 18ø</text>
    <path
      d="M571 693.700H494L443.600 700L406 705.700Q390 711 379 719.300Q366 730 366 745V763Q366 781 386.400 783.300L408 785L443.600 788L494 789H533L558 791.700H808Q838 791 854 785.700Q868 782 868 775Q871 760 856 751.700L836 740Q829 736 820 733.500L768.600 720.700L711.400 709.300L658 701Q645 699 633 699H583L561 696.700"
      stroke="#e81b1b"
      strokeWidth="4"
      strokeLinejoin="round"
    />
    <text x="495" y="907" fontSize="18" fill="#1f8500">1 No. FL300X10 - Mkd PL1</text>
    <path d="M15.500 843.500v87h50zM15.500 922.500h8v8M17 869.500l6.500 6 6.500-6M23.500 875v7M43 916l13 13M56 916l-13 13" stroke="#1e50ff" />
    <path d="M1055 700.500h45M1107 700.500h45M1103.500 652v45M1103.500 704v45M1100.500 697.500h6v6h-6z" stroke="#000" />
  </svg>
);

const gear = (
  <Ico>
    <circle cx="8" cy="8" r="6.800" stroke="#62666e" strokeWidth="2" strokeDasharray="3 2.300" />
    <circle cx="8" cy="8" r="5.500" fill="#e6e8ea" stroke="#62666e" />
    <circle cx="8" cy="8" r="2.200" stroke="#62666e" />
  </Ico>
);

const palettes = [
  { name: 'Advance Tool P...', box: 'w-[207px] mr-px', person: false },
  { name: 'Connection vault', box: 'w-[219px] mr-px', person: false },
  { name: 'Drawing Styl...', box: 'w-[209px]', person: true },
  { name: 'Drawing Proc...', box: 'w-[219px]', person: true },
  { name: 'Stairs and Railings', box: 'w-[219px]', person: false },
];

const Palettes = () => (
  <div className="absolute left-[63px] top-[76px] flex w-[220px] flex-col items-end">
    {palettes.map((p) => (
      <div key={p.name} className={`flex h-[27px] items-center gap-1 rounded-md border border-black bg-gradient-to-b from-[#e4e4e4] to-white pr-[3px] ${p.box}`}>
        <span className="flex-1 text-center text-[15px] leading-6 whitespace-nowrap text-[#111]">{p.name}</span>
        {p.person && (
          <Ico><path d="M4 5q0-5 4-5t4 5q0 3-2 5l5 3v3H1v-3l5-3Q4 8 4 5z" fill="#6f9bd6" stroke="#3b68a8" strokeWidth=".8" /></Ico>
        )}
        <button type="button" aria-label={`${p.name} settings`}>{gear}</button>
        <button type="button" aria-label={`Pin ${p.name}`}>
          <Ico><path d="M1 8h6M6.500 5v6" stroke="#777" strokeWidth="1.400" /><path d="M7 6h4v4H7zM11 5h4v6h-4z" fill="#9b9b96" stroke="#6f6f6a" strokeWidth=".7" /></Ico>
        </button>
        <button type="button" aria-label={`Expand ${p.name}`}>
          <Ico><path d="M6.500 1.500h3v5h5v3h-5v5h-3v-5h-5v-3h5z" fill="#9aa8ba" stroke="#3d4654" /></Ico>
        </button>
        <button type="button" aria-label={`Close ${p.name}`}>
          <Ico><path d="M2 2l12 12M14 2L2 14" stroke="#6e6e6e" strokeWidth="3.600" /><path d="M2 2l12 12M14 2L2 14" stroke="#d8d8d8" strokeWidth="1.800" /></Ico>
        </button>
      </div>
    ))}
  </div>
);

interface ComboProps {
  label: string;
  value: string;
  className?: string;
  muted?: boolean;
  icon?: React.ReactNode;
}

const Combo: React.FC<ComboProps> = ({ label, value, className = '', muted = false, icon }) => (
  <div className={`relative flex h-[21px] shrink-0 items-center border pl-1 ${muted ? 'border-[#adadad] bg-[#e1e1e1]' : 'border-[#7a7a7a] bg-white'} ${className}`}>
    {icon}
    <select aria-label={label} className="h-full w-full appearance-none bg-transparent text-[11px] leading-4 text-black outline-none">
      <option>{value}</option>
    </select>
    <svg width="9" height="6" viewBox="0 0 9 6" fill="none" className="absolute right-1 top-[7px]" aria-hidden="true">
      <path d="M.5.5l4 4 4-4" stroke="#444" strokeWidth="1.200" />
    </svg>
  </div>
);

const Bar = () => <span className="h-5 w-px shrink-0 bg-[#8c8c8c]" />;
const Bars = () => (
  <span className="mx-[2px] flex shrink-0 gap-1">
    <Bar />
    <Bar />
  </span>
);

const row = 'flex h-[26px] items-center border-t border-[#999] bg-[#f0f0f0] pb-[2px] pl-[2px]';

const LabelDialog = () => (
  <div role="dialog" aria-label="Label and symbols" className="absolute left-[989px] top-[62px] flex h-[367px] w-[579px] flex-col border border-[#7d7d7d] bg-white text-[11px] text-black">
    <div className="flex h-[31px] shrink-0 items-center px-2 text-[#8f8f8f]">
      <span className="bg-[#dfe9f5]"><LogoA size={15} /></span>
      <span className="ml-[6px]">Advance Steel</span>
      <span className="ml-3 flex-1">Label and symbols</span>
      <button type="button" aria-label="Close dialog">
        <svg width="13" height="13" viewBox="0 0 13 13" fill="none" aria-hidden="true"><path d="M1 1l11 11M12 1L1 12" stroke="#8a8a8a" /></svg>
      </button>
    </div>
    <div className="flex min-h-0 flex-1 pb-px pl-px">
      <div className="flex w-[118px] shrink-0 flex-col gap-[2px] border border-[#7d8190] bg-[#c8d6fb] p-[2px]">
        {['Label content', 'Leader line', 'Revision'].map((item, i) => (
          <button
            key={item}
            type="button"
            className={`h-7 shrink-0 border pl-[6px] text-left ${
              i === 0 ? 'border-[#8e9ccb] border-r-white border-b-white bg-gradient-to-b from-[#afbedd] to-[#92a5d2] text-[#0a1a80]' : 'border-transparent'
            }`}
          >
            {item}
          </button>
        ))}
      </div>
      <div className="ml-px flex-1 border-l border-[#dcdcdc] pl-[18px] pr-[49px] pt-[13px]">
        <div className={row}>
          <Bar />
          <Combo label="Token" value="Token(none)" muted className="ml-[2px] w-[100px]" />
          <Bars />
          <Combo label="Function" value="Function(none)" muted className="ml-px w-[105px]" />
          <Bars />
          <Combo label="Zoom" value="160%" className="ml-px mr-[2px] w-20" />
          <Bar />
          <button type="button" aria-label="Text direction" className="ml-[10px]">
            <svg width="9" height="12" viewBox="0 0 9 12" fill="none" aria-hidden="true"><path d="M7.500 0v12M7.500 1H3Q0 3 3 6h4" stroke="#000" strokeWidth="1.500" /></svg>
          </button>
        </div>
        <div className={row}>
          <Bar />
          <Combo
            label="Font"
            value="Arial"
            className="ml-[2px] w-[100px]"
            icon={<svg width="14" height="12" viewBox="0 0 14 12" fill="none" className="mr-[2px] shrink-0" aria-hidden="true"><path d="M0 1h7M3.500 1v7" stroke="#888" strokeWidth="1.500" /><path d="M4 4h9M8.500 4v8M6.500 11.500h4M4.500 4v2M12.500 4v2" stroke="#000" strokeWidth="1.600" /></svg>}
          />
          <Bars />
          <Combo label="Size" value="2.5" className="ml-px mr-[2px] w-[76px]" />
          <Bar />
          <button type="button" className="w-[29px] text-[12px] font-bold">B</button>
          <Bar />
          <button type="button" className="w-[29px] font-serif text-[12px] italic">I</button>
          <Bar />
          <button type="button" className="w-[29px] text-[12px] font-bold underline">U</button>
          <Bars />
          <Combo label="Colour" value="Default" className="w-20" icon={<span className="mr-1 h-[11px] w-[11px] shrink-0 bg-black" />} />
        </div>
        <div className={row}>
          <Bar />
          <Combo label="Frame" value="Frame(none)" className="ml-[2px] w-[100px]" />
          <Bars />
          <span className="ml-px h-[21px] w-[105px] border border-[#cfcfcf] bg-[#efefef]" />
          <Bars />
          <Combo label="Line spacing" value="1.0" className="ml-px mr-[2px] w-[100px]" />
          <Bar />
        </div>
        <textarea
          aria-label="Label text"
          defaultValue="4 - 18ø"
          className="block h-[174px] w-full resize-none border border-[#e3e3e3] border-t-[#666] border-l-[#666] bg-white px-[2px] font-['Liberation_Sans',Arial,sans-serif] text-[14px] leading-5 outline-none"
        />
      </div>
    </div>
  </div>
);

const NavBar = () => (
  <>
    <div className="absolute right-[10px] top-[13px] flex items-center gap-2">
      <svg width="12" height="12" viewBox="0 0 12 12" aria-hidden="true"><path d="M.5 5.500h11v3H.5z" fill="#fff" stroke="#444" /></svg>
      <svg width="12" height="12" viewBox="0 0 12 12" fill="none" aria-hidden="true"><path d="M4 3V1h7v7H9" stroke="#fff" strokeWidth="1.500" /><path d="M1.500 3.500h7v7h-7z" stroke="#444" strokeWidth="3" /><path d="M1.500 3.500h7v7h-7z" stroke="#fff" strokeWidth="1.600" /></svg>
      <svg width="12" height="12" viewBox="0 0 12 12" fill="none" aria-hidden="true"><path d="M2 2l8 8M10 2l-8 8" stroke="#444" strokeWidth="4.500" /><path d="M2 2l8 8M10 2l-8 8" stroke="#fff" strokeWidth="2.500" /></svg>
    </div>
    <svg width="35" height="136" viewBox="0 0 35 136" fill="none" className="absolute right-[3px] top-[25px]" aria-hidden="true">
      <rect x="1" y="1" width="33" height="134" rx="4" fill="#a1a1a1" stroke="#696969" strokeWidth="2" />
      <circle cx="28" cy="7" r="4" fill="#858585" />
      <path d="M26.500 5.500l3 3M29.500 5.500l-3 3" stroke="#b5b5b5" />
      <path d="M2 13.500h30M5 49.500h26" stroke="#b0b0b0" />
      <path d="M16 42Q6 42 6 32.500T16 23h7v15" stroke="#8a8a8a" strokeWidth="1.500" />
      <circle cx="15" cy="32" r="4.500" stroke="#8a8a8a" strokeWidth="1.500" />
      <path d="M7 42q-1-3 2-4M21 38q-3-2-6-1" stroke="#8a8a8a" />
      <text x="17" y="44" fontSize="8" fontWeight="bold" fill="#7d8ea0">2D</text>
      <path d="M12 76l-5-9q1-2 4 1l2 2-2-12q2-2 3 1l2 7V55q2-2 3 0v11l2-9q2-1 2 1v9l3-5q2 0 1 2l-3 11-2 2h-8z" stroke="#828282" strokeWidth="1.200" />
      <path d="M6 82l14 14M20 82L6 96M6 86v-4h4M16 82h4v4M6 92v4h4" stroke="#828282" strokeWidth="1.300" />
      <circle cx="21" cy="96" r="4.500" fill="#a1a1a1" stroke="#828282" strokeWidth="1.300" />
      <path d="M25 99l5 4" stroke="#828282" strokeWidth="2.500" />
      <path d="M15 111h6l-3 3z" fill="#828282" />
      <circle cx="28" cy="128" r="4" fill="#858585" />
      <path d="M26 127h4M27 129h2" stroke="#b5b5b5" />
    </svg>
  </>
);

const Canvas = () => (
  <main className="relative min-h-0 flex-1 overflow-hidden bg-[#8a8a8a]">
    <div className="flex h-full w-[70%] justify-end bg-white shadow-[1px_0_3px_#6a6a6a]">
      <div className="mr-[19px] flex gap-[2px]">
        <span className="w-px bg-[#3a36e0]" />
        <span className="border-l border-dashed border-[#a0a0a0]" />
      </div>
    </div>
    <PlateDrawing />
    <Palettes />
    <LabelDialog />
    <NavBar />
  </main>
);

const CommandLine = () => (
  <section className="flex h-16 shrink-0 border-t-2 border-[#3b4453] bg-[#222933] pr-px">
    <div className="flex w-[25px] shrink-0 flex-col items-center bg-[#2b313d] pt-[5px]">
      <svg width="17" height="5" viewBox="0 0 17 5" aria-hidden="true">
        {cells(6, 2, 3).map(([x, y], i) => <rect key={i} x={x} y={y} width="2" height="2" fill="#d9d9d9" />)}
      </svg>
      <button type="button" aria-label="Close command line" className="mt-1 -ml-1"><X size={12} strokeWidth={4} color={G} /></button>
      <button type="button" aria-label="Customize" className="mt-3 -ml-1">
        <Ico><path d="M1 15l7-7" stroke={G} strokeWidth="2.500" /><path d="M13 1q-5-1-6 3t3 5q5 1 5-5l-3 2-2-2z" fill={G} /></Ico>
      </button>
    </div>
    <div className="flex flex-1 flex-col pt-px font-['Liberation_Mono',monospace] text-[12px]">
      <div className="h-10 bg-[#c8c8c8] pl-[2px] pt-[9px] leading-[15px] text-black">
        <p>Command: _AstM4CommMultiEdit 0</p>
        <p>1 found</p>
      </div>
      <div className="mt-px flex h-5 items-center bg-white pl-1">
        <svg width="16" height="12" viewBox="0 0 16 12" fill="none" aria-hidden="true"><path d="M.7.7h14.600v10.600H.7zM0 2h16M3 5l2 1.500L3 8M7 9h4" stroke="#666" strokeWidth="1.200" /></svg>
        <svg width="8" height="5" viewBox="0 0 8 5" className="ml-[2px]" aria-hidden="true"><path d="M0 0h8L4 5z" fill="#666" /></svg>
        <input aria-label="Command" placeholder="Type a command" className="ml-[6px] flex-1 bg-transparent italic outline-none placeholder:text-[#777]" />
      </div>
    </div>
  </section>
);

const cell = 'flex h-[25px] items-center justify-center bg-[#3b4453]';
const on = 'flex h-[23px] w-[22px] items-center justify-center bg-[#5f8dc0]';

const StatusBar = () => (
  <footer className="flex h-[30px] shrink-0 items-start border-t border-[#3b4453] bg-[#222933] pr-[2px] text-[11px]">
    <nav className="flex flex-1 pl-4">
      <button type="button" className="h-[18px] w-12 rounded-b-lg bg-[#2d3440] text-[#a5a9b0]">Model</button>
      <button type="button" className="ml-[6px] h-[18px] w-[116px] rounded-b-lg bg-[#3b4453] font-bold whitespace-nowrap text-white">A3 Advance Steel</button>
      <button type="button" aria-label="New layout" className="ml-2 mt-px flex h-[14px] w-[22px] items-center justify-center rounded-tl-lg rounded-br-lg bg-[#2d3440]">
        <svg width="8" height="8" viewBox="0 0 8 8" aria-hidden="true"><path d="M4 0v8M0 4h8" stroke="#b3b7bd" strokeWidth="2" /></svg>
      </button>
    </nav>
    <div className="flex items-center gap-[3px] pt-px text-[#e6e6e6]">
      <button type="button" className={`${cell} w-10`}>PAPER</button>
      <div className={`${cell} w-[195px] justify-start`}>
        <span className="flex w-6 justify-center border-r border-[#222933]"><Ico><path d="M0 4.500h7M3.500 1v7M4 13.500h3" stroke={G} strokeWidth="1.400" /><path d="M7 10h9v4H7z" fill={G} /></Ico></span>
        <span className="flex w-[25px] justify-center"><Ico><path d="M1.500 0v14.500H16M2 9.500h4.500V14" stroke={G} strokeWidth="1.500" /></Ico></span>
        <span className={on}><Ico><circle cx="7" cy="9" r="6" stroke="#fff" strokeWidth="1.500" /><path d="M7 9h9M7 9l6-7M7 6v3" stroke="#fff" strokeWidth="1.400" /></Ico></span>
        <Caret big className="ml-[6px]" />
        <span className="ml-2"><Ico><path d="M8 0v16" stroke="#4fd07a" strokeWidth="1.200" /><path d="M1 1l14 14" stroke="#e86060" strokeWidth="1.300" /><path d="M7 7h2v2H7z" fill="#fff" /></Ico></span>
        <Caret big className="ml-2" />
        <span className={`ml-[6px] ${on}`}><Ico><path d="M14 1L1 14.500h15M6 8h4" stroke="#fff" strokeWidth="1.600" /></Ico></span>
        <span className={`ml-[2px] ${on}`}><Ico><path d="M3 3h12v12H3z" stroke="#fff" strokeWidth="1.400" /><path d="M.7.7h4v4h-4z" fill="#5f8dc0" stroke="#fff" strokeWidth="1.400" /></Ico></span>
        <Caret big className="ml-[6px]" />
      </div>
      <div className={`${cell} w-[72px] gap-2`}>
        <Ico><path d="M8 1h7v14H1V8" stroke={G} strokeWidth="1.200" strokeDasharray="2 1.500" /><path d="M8 8h5v5H8zM6 6L1 1M1 5V1h4" stroke={G} strokeWidth="1.500" /></Ico>
        <Ico><path d="M7 0l6 16-6-4-7 4 5-9z" fill={G} /><circle cx="13" cy="4" r="2.200" stroke={G} /></Ico>
        <Ico><path d="M7 0l6 16-6-4-7 4 5-9z" fill={G} /><path d="M15 0l-5 5h3l-2 4 5-5h-3z" fill={G} /></Ico>
      </div>
      <div className={`${cell} w-[39px] gap-2`}>
        <Ico><circle cx="8" cy="8" r="6" stroke={G} strokeWidth="3" strokeDasharray="2.700 2" /><circle cx="8" cy="8" r="3.800" stroke={G} strokeWidth="3" /></Ico>
        <Caret big />
      </div>
      <div className={`${cell} -ml-px w-6`}><Ico><path d="M8 0v16M0 8h16" stroke={G} strokeWidth="1.800" /></Ico></div>
      <div className={`${cell} w-6`}><Ico><path d="M1 1h5v5H1zM8 10l3 5H5z" stroke={G} strokeWidth="1.300" /><circle cx="13" cy="6" r="2.400" stroke={G} strokeWidth="1.300" /></Ico></div>
      <div className={`${cell} w-6`}><span className={on}><Ico><circle cx="8" cy="8" r="7.300" fill="#8fb4da" stroke="#fff" /><path d="M6 10l6-6M7 10.500l-1.500-1.500" stroke="#fff" strokeWidth="1.600" /></Ico></span></div>
      <div className={`${cell} w-[49px] gap-2`}>
        <div className="relative">
          <Ico><path d="M3 0h8l4 5v8H3z" fill="#2c66a8" /><path d="M0 3.500h8M3.500 0v8" stroke="#fff" /><path d="M0 8h6v6H0z" fill="#f5b52e" /></Ico>
          <Check size={10} strokeWidth={5} color="#4caf50" className="absolute right-0 bottom-0" />
        </div>
        <Ico><path d="M0 0h15v12H0z" fill={G} /><path d="M1 8l4-6 4 5 3-3 3 5" stroke="#5a6472" strokeWidth="1.200" /><path d="M11 6l5 10H7z" fill="#f0995a" /><path d="M11.500 10v3" stroke="#fff" /></Ico>
      </div>
      <div className={`${cell} w-12 gap-2`}>
        <Ico><path d="M.7 2.700h14.600v10.600H.7z" stroke={G} strokeWidth="1.400" /><path d="M9 7l3-2.500M9.500 4.500H12V7M7 9l-3 2.500M6.500 11.500H4V9" stroke={G} /></Ico>
        <Ico><path d="M0 2h16M0 8h16M0 14h16" stroke={G} strokeWidth="2" /></Ico>
      </div>
    </div>
  </footer>
);

const Taskbar = () => (
  <div className="flex h-2 shrink-0 overflow-hidden bg-gradient-to-r from-[#1f3a40] via-[#20343f] to-[#1a2748] pl-12">
    <div className="h-full w-[344px] border border-b-0 border-[#b5b5b5] bg-[#f2f2f2]" />
    <div className="ml-[345px] w-11 bg-[#4f626a]" />
    <div className="ml-px w-[3px] bg-[#414d55]" />
    <div className="flex-1" />
    <span className="mr-[69px] h-4 pt-[2px] text-[11px] leading-4 text-white">08:38</span>
    <div className="mr-3 w-px bg-[#7d8595]" />
  </div>
);

const App: React.FC = () => (
  <div className="flex h-screen flex-col overflow-hidden bg-white font-['Open_Sans','Noto_Sans',sans-serif]">
    <div className="relative flex min-h-0 flex-1">
      <div className="absolute left-[840px] top-0 flex h-px w-[241px] justify-center bg-[#ececec]">
        <span className="w-12 bg-[#0078d7]" />
      </div>
      <div className="flex min-w-0 flex-1 flex-col">
        <TitleBar />
        <RibbonTabs />
        <Ribbon />
        <DocTabs />
        <Canvas />
        <CommandLine />
        <StatusBar />
      </div>
      <aside className="flex w-2 shrink-0 flex-col bg-white pt-px">
        <div className="h-8 bg-[#479be3]" />
        <div className="h-[71px] bg-[#f3f3f3]" />
        <div className="h-14 bg-black" />
        <div className="h-[42px] border-t border-[#333] bg-[#0a0a0a]" />
      </aside>
    </div>
    <Taskbar />
  </div>
);

export default App;
